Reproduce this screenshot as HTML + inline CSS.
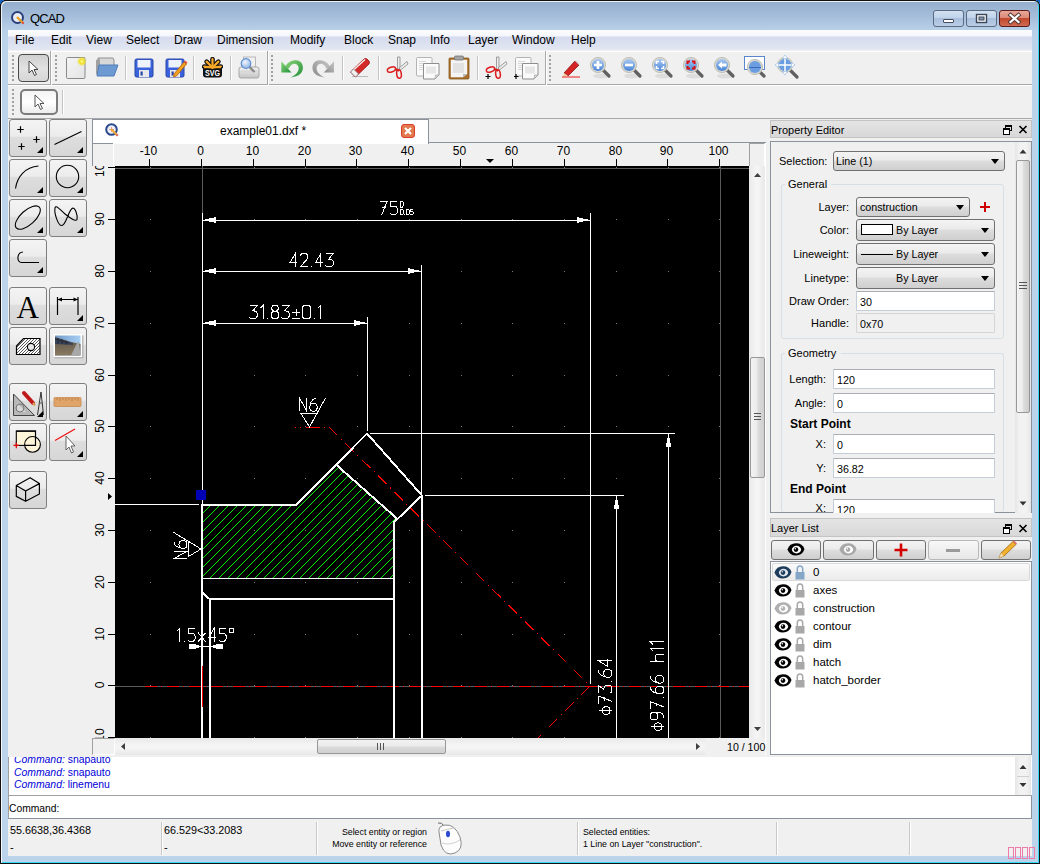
<!DOCTYPE html>
<html><head><meta charset="utf-8">
<style>
*{box-sizing:border-box}
html,body{margin:0;padding:0}
body{width:1040px;height:864px;position:relative;overflow:hidden;background:#1a1a1a;font-family:"Liberation Sans",sans-serif;font-size:12px;color:#000}
.a{position:absolute}
#frame{left:0;top:0;width:1040px;height:864px;border-radius:6px 6px 0 0;background:linear-gradient(#93aecb 0px,#a3bcd9 14px,#b8cfe8 29px,#bcd3ec 40px,#bcd3ec 864px);border:1px solid #111;box-shadow:inset 1px 1px 0 rgba(255,255,255,.85),inset -1px -1px 0 #3ad8f8}
#menubar{left:8px;top:30px;width:1024px;height:21px;box-sizing:border-box;background:linear-gradient(#fcfdfe 0,#f5f6fb 6px,#d5dbee 7px,#e3e7f3 20px);border-bottom:1px solid #b0b6c8}
#menubar span{position:absolute;top:3px;font-size:12px}
#content{left:8px;top:50px;width:1024px;height:805px;background:#f0f0f0}
.tb{border-bottom:1px solid #a0a0a0}
.sep{position:absolute;width:1px;background:#c4c4c4;box-shadow:1px 0 0 #fff}
.handle{position:absolute;width:2px;background:repeating-linear-gradient(#a0a0a0 0 2px,transparent 2px 4px)}
.tbtn{position:absolute;border:1px solid #6f6f6f;border-radius:4px;background:linear-gradient(#f6f6f6,#e9e9e9 45%,#d9d9d9 50%,#cfcfcf)}
.tool{position:absolute;width:38px;height:38px;border:1px solid #7e7e7e;border-radius:3px;background:linear-gradient(#f4f4f4 0,#ececec 45%,#dedede 48%,#d6d6d6 100%)}
.tool:after{content:"";position:absolute;right:2px;bottom:2px;border-style:solid;border-width:0 0 8px 8px;border-color:transparent transparent #000 transparent}
.tool.n:after{display:none}
</style></head><body>

<div id="frame" class="a"></div>
<!-- title -->
<svg class="a" style="left:11px;top:11px" width="14" height="14" viewBox="0 0 14 14"><circle cx="6.5" cy="6.5" r="5.5" fill="#e8ecf4" stroke="#2a3f7a" stroke-width="2"/><path d="M6 6 L12 12" stroke="#e8a020" stroke-width="2.2"/><circle cx="12" cy="12" r="1.2" fill="#e05050"/></svg>
<div class="a" style="left:30px;top:11px;font-size:13px;letter-spacing:-0.9px;color:#000">QCAD</div>
<div class="a" style="left:0;top:0;width:4px;height:4px;background:radial-gradient(circle at 4px 4px,transparent 3px,#1565c8 3.5px)"></div>
<div class="a" style="left:1036px;top:0;width:4px;height:4px;background:radial-gradient(circle at 0 4px,transparent 3px,#1565c8 3.5px)"></div>
<!-- window buttons -->
<div class="a" style="left:933px;top:10px;width:31px;height:17px;border:1px solid #5a6a80;border-radius:3px;background:linear-gradient(#d3e1f1 0,#c0d3ea 45%,#a9bfdc 50%,#b9cde6 100%)"><div class="a" style="left:9px;top:8px;width:11px;height:4px;background:#fff;border:1px solid #44505f;border-radius:1px"></div></div>
<div class="a" style="left:966px;top:10px;width:31px;height:17px;border:1px solid #5a6a80;border-radius:3px;background:linear-gradient(#d3e1f1 0,#c0d3ea 45%,#a9bfdc 50%,#b9cde6 100%)"></div>
<svg class="a" style="left:966px;top:10px" width="31" height="17" viewBox="0 0 31 17"><rect x="10.5" y="4.5" width="10" height="8" fill="#fff" stroke="#3a4658" stroke-width="1.4"/><rect x="13" y="7" width="5" height="3" fill="#8898b0" stroke="#3a4658" stroke-width="1"/></svg>
<div class="a" style="left:999px;top:10px;width:31px;height:17px;border:1px solid #5a1c1c;border-radius:3px;background:linear-gradient(#e8a899 0,#dd8a78 45%,#c24a2f 50%,#d06a50 100%)"></div>
<svg class="a" style="left:999px;top:10px" width="31" height="17" viewBox="0 0 31 17"><path d="M11.5 5 L19.5 12 M19.5 5 L11.5 12" stroke="#4a3030" stroke-width="4" stroke-linecap="square"/><path d="M11.5 5 L19.5 12 M19.5 5 L11.5 12" stroke="#fff" stroke-width="2.3" stroke-linecap="square"/></svg>

<div id="menubar" class="a">
<span style="left:7px">File</span><span style="left:43px">Edit</span><span style="left:78px">View</span><span style="left:118px">Select</span><span style="left:166px">Draw</span><span style="left:209px">Dimension</span><span style="left:282px">Modify</span><span style="left:336px">Block</span><span style="left:380px">Snap</span><span style="left:422px">Info</span><span style="left:460px">Layer</span><span style="left:504px">Window</span><span style="left:563px">Help</span>
</div>
<div id="content" class="a"></div>

<!-- toolbar 1 -->
<div class="a" style="left:8px;top:51px;width:1024px;height:34px;border-top:1px solid #fff;border-bottom:1px solid #a8a8a8;box-shadow:0 1px 0 #fff"></div>
<div class="a" style="left:50px;top:51px;width:1px;height:34px;background:#a8a8a8;box-shadow:1px 0 0 #fff"></div>
<div class="a" style="left:267px;top:51px;width:1px;height:34px;background:#a8a8a8;box-shadow:1px 0 0 #fff"></div>
<div class="a" style="left:545px;top:51px;width:1px;height:34px;background:#a8a8a8;box-shadow:1px 0 0 #fff"></div>
<div class="handle" style="left:12px;top:55px;height:27px"></div>
<div class="handle" style="left:55px;top:55px;height:27px"></div>
<div class="handle" style="left:271px;top:55px;height:27px"></div>
<div class="handle" style="left:549px;top:55px;height:27px"></div>
<div class="a" style="left:18px;top:54px;width:31px;height:28px;border:1px solid #4a4a4a;border-radius:4px;background:linear-gradient(#cfcfcf,#dedede 40%,#e2e2e2 50%,#d6d6d6)"></div>
<svg class="a" style="left:28px;top:60px" width="12" height="17" viewBox="0 0 12 17"><path d="M1 1 L1 13 L4 10 L6.5 15.5 L8.5 14.5 L6 9.5 L10 9.5 Z" fill="#fff" stroke="#444" stroke-width="1"/></svg>
<div class="sep" style="left:125px;top:56px;height:24px"></div>
<div class="sep" style="left:193px;top:56px;height:24px"></div>
<div class="sep" style="left:230px;top:56px;height:24px"></div>
<div class="sep" style="left:342px;top:56px;height:24px"></div>
<div class="sep" style="left:378px;top:56px;height:24px"></div>
<div class="sep" style="left:477px;top:56px;height:24px"></div>
<!-- toolbar 2 -->
<div class="handle" style="left:12px;top:89px;height:27px"></div>
<div class="a" style="left:20px;top:89px;width:38px;height:26px;border:2px solid #7c7c7c;border-radius:5px;background:linear-gradient(#f4f4f4,#ffffff 50%,#ececec)"></div>
<svg class="a" style="left:34px;top:94px" width="12" height="17" viewBox="0 0 12 17"><path d="M1 1 L1 13 L4 10 L6.5 15.5 L8.5 14.5 L6 9.5 L10 9.5 Z" fill="#fff" stroke="#555" stroke-width="1"/></svg>
<div class="sep" style="left:62px;top:90px;height:24px"></div>


<svg class="a" style="left:65px;top:56px" width="24" height="24" viewBox="0 0 24 24"><defs><radialGradient id="yg"><stop offset="0" stop-color="#ffffa0"/><stop offset=".45" stop-color="#f0e020"/><stop offset="1" stop-color="#f0e020" stop-opacity="0"/></radialGradient>
<linearGradient id="pg" x1="0" y1="0" x2="1" y2="1"><stop offset="0" stop-color="#f4f4f4"/><stop offset="1" stop-color="#e4e4e4"/></linearGradient></defs>
<rect x="1.5" y="1.5" width="18.5" height="21" rx="1" fill="url(#pg)" stroke="#8a8a8a"/><circle cx="16.8" cy="5.4" r="5" fill="url(#yg)"/></svg>
<svg class="a" style="left:94px;top:56px" width="26" height="22" viewBox="0 0 26 22"><path d="M4 2 L19 2 L20 4 L20 12 L4 12 Z" fill="#d8d8d8" stroke="#909090"/><path d="M2 4 L6 3 L6 20 L2 18 Z" fill="#a0a0a0"/><path d="M5 9 L24 9 L20 20 L3 20 Z" fill="#6d9ad2" stroke="#4f7cb8"/></svg>
<svg class="a" style="left:134px;top:58px" width="24" height="21" viewBox="0 0 24 21"><rect x="1" y="1" width="18" height="18" rx="1.5" fill="#3a62dc" stroke="#2a46a8"/><rect x="3.5" y="2" width="13" height="7.5" fill="#eef2fb"/><rect x="5" y="12" width="10" height="7" fill="#e8e8ec"/><rect x="6.5" y="13.5" width="2.2" height="4" fill="#2a46a8"/></svg>
<svg class="a" style="left:165px;top:58px" width="24" height="21" viewBox="0 0 24 21"><rect x="1" y="1" width="18" height="18" rx="1.5" fill="#3a62dc" stroke="#2a46a8"/><rect x="3.5" y="2" width="13" height="7.5" fill="#eef2fb"/><rect x="5" y="12" width="10" height="7" fill="#e8e8ec"/><rect x="6.5" y="13.5" width="2.2" height="4" fill="#2a46a8"/><path d="M9 16 L19 4 L21.5 6 L11.5 18 L8.5 19 Z" fill="#f0a020" stroke="#b06010" stroke-width=".8"/><path d="M19 4 L21.5 6 L22.5 4.5 L20 2.5 Z" fill="#e05030"/></svg>
<svg class="a" style="left:202px;top:57px" width="21" height="22" viewBox="0 0 21 22"><rect x="1" y="9" width="19" height="11.5" rx="3" fill="#111"/><path d="M10.5 10.5 L10.5 2.2" stroke="#111" stroke-width="4.6" stroke-linecap="round"/><path d="M10.5 10.5 L4.6 4.6" stroke="#111" stroke-width="4.6" stroke-linecap="round"/><path d="M10.5 10.5 L16.4 4.6" stroke="#111" stroke-width="4.6" stroke-linecap="round"/><path d="M10.5 10.5 L2.2 9.5" stroke="#111" stroke-width="4.6" stroke-linecap="round"/><path d="M10.5 10.5 L18.8 9.5" stroke="#111" stroke-width="4.6" stroke-linecap="round"/><path d="M10.5 10.5 L10.5 2.2" stroke="#f7a928" stroke-width="2.2" stroke-linecap="round"/><path d="M10.5 10.5 L4.6 4.6" stroke="#f7a928" stroke-width="2.2" stroke-linecap="round"/><path d="M10.5 10.5 L16.4 4.6" stroke="#f7a928" stroke-width="2.2" stroke-linecap="round"/><path d="M10.5 10.5 L2.2 9.5" stroke="#f7a928" stroke-width="2.2" stroke-linecap="round"/><path d="M10.5 10.5 L18.8 9.5" stroke="#f7a928" stroke-width="2.2" stroke-linecap="round"/><rect x="2" y="9.6" width="17" height="1.6" fill="#f7a928"/><text x="10.5" y="19" font-family="Liberation Sans" font-weight="bold" font-size="9" fill="#fff" text-anchor="middle" textLength="15" lengthAdjust="spacingAndGlyphs">SVG</text></svg>
<svg class="a" style="left:237px;top:56px" width="24" height="23" viewBox="0 0 24 23"><defs><radialGradient id="lensg" cx=".4" cy=".35"><stop offset="0" stop-color="#f4f8fe"/><stop offset="1" stop-color="#a8c4ea"/></radialGradient><linearGradient id="prg" x1="0" y1="0" x2="0" y2="1"><stop offset="0" stop-color="#f2f2f2"/><stop offset="1" stop-color="#c4c4c4"/></linearGradient></defs><rect x="6.5" y="1" width="12" height="11" fill="#f0f0f0" stroke="#b8b8b8"/><path d="M2 13 Q2 11 4 11 L20 11 Q22 11 22 13 L22 20 Q22 22 20 22 L4 22 Q2 22 2 20 Z" fill="url(#prg)" stroke="#a8a8a8"/><rect x="4" y="14.5" width="16" height="2" fill="#d8d8d8"/><path d="M12.5 11 L17.5 16" stroke="#8a8a8a" stroke-width="2.4"/><circle cx="9" cy="7.5" r="4.8" fill="url(#lensg)" stroke="#5f8fd6" stroke-width="1.2"/></svg>
<svg class="a" style="left:279px;top:57px" width="26" height="22" viewBox="0 0 26 22"><defs><linearGradient id="ug" x1="0" y1="0" x2="1" y2="1"><stop offset="0" stop-color="#8ed47a"/><stop offset="1" stop-color="#1e9038"/></linearGradient></defs><path d="M6 10 C 9 3, 21 0, 23.5 8 C 25.5 15, 20 20, 11 20.5 C 17 18.5, 20.5 14, 19.5 10 C 18 5.5, 12 5.5, 10 11.5 Z" fill="url(#ug)"/><path d="M2.3 4.3 L2.3 15.5 L12.5 15.5 Z" fill="url(#ug)"/></svg>
<svg class="a" style="left:310px;top:57px" width="26" height="22" viewBox="0 0 26 22"><defs><linearGradient id="rg" x1="0" y1="0" x2="1" y2="1"><stop offset="0" stop-color="#c8c8c8"/><stop offset="1" stop-color="#8a8a8a"/></linearGradient></defs><g transform="translate(26.3 0) scale(-1 1)"><path d="M6 10 C 9 3, 21 0, 23.5 8 C 25.5 15, 20 20, 11 20.5 C 17 18.5, 20.5 14, 19.5 10 C 18 5.5, 12 5.5, 10 11.5 Z" fill="url(#rg)"/><path d="M2.3 4.3 L2.3 15.5 L12.5 15.5 Z" fill="url(#rg)"/></g></svg>
<svg class="a" style="left:349px;top:57px" width="22" height="22" viewBox="0 0 22 22"><path d="M3 19.5 L19 19.5" stroke="#bbb" stroke-width="1"/><path d="M1.5 15 L15 2 Q16.5 1 18 2 L20 4 Q21 5.5 20 7 L6.5 20 Z" fill="#d42a2a" stroke="#9c1414" stroke-width=".8"/><path d="M4 13.5 L16 2.5" stroke="#f6f6f6" stroke-width="1.3"/><path d="M1.5 15 L4.5 12 L9.5 17 L6.5 20 Z" fill="#f2f2f2" stroke="#8a8a8a" stroke-width=".8"/></svg>
<svg class="a" style="left:385px;top:56px" width="24" height="24" viewBox="0 0 24 24"><path d="M12.5 1 L15 1 L15 12 L12.5 14 Z" fill="#ececec" stroke="#8a8a8a" stroke-width=".8"/><path d="M14 12 L22 5.5 L23 8 L15.5 14 Z" fill="#ececec" stroke="#8a8a8a" stroke-width=".8"/><ellipse cx="6.5" cy="13.5" rx="4.3" ry="2.4" transform="rotate(-20 6.5 13.5)" fill="none" stroke="#dc1c1c" stroke-width="1.5"/><ellipse cx="14" cy="18" rx="2.3" ry="4.3" transform="rotate(-8 14 18)" fill="none" stroke="#dc1c1c" stroke-width="1.5"/><path d="M10 12.5 L14 15" stroke="#dc1c1c" stroke-width="1.6"/></svg>
<svg class="a" style="left:415px;top:56px" width="25" height="24" viewBox="0 0 25 24"><rect x="1.5" y="1.5" width="15.5" height="18.5" rx="1" fill="#fafafa" stroke="#b4b4b4"/><path d="M4 5.5 H11 M4 7.5 H11 M4 9.5 H11 M4 11.5 H11 M4 13.5 H11" stroke="#cfcfcf" stroke-width=".8"/><path d="M8.5 7.5 H24 V19 L20 23 H8.5 Z" fill="#fbfbfb" stroke="#8e8e8e"/><path d="M20 23 L24 19 H20.5 Z" fill="#d8d8d8" stroke="#9a9a9a" stroke-width=".6"/><rect x="11" y="10.5" width="10" height="7" fill="#e6e6e6"/></svg>
<svg class="a" style="left:448px;top:55px" width="22" height="25" viewBox="0 0 22 25"><rect x="1" y="3" width="20" height="21" rx="1" fill="#a8702a" stroke="#86561a" stroke-width=".8"/><path d="M2.8 4.8 H19.2 V19 L15 22.3 H2.8 Z" fill="#f4f4f4"/><rect x="5" y="8" width="11" height="10" fill="#e2e2e2"/><path d="M15 22.3 L19.2 19 H15 Z" fill="#bdbdbd"/><rect x="6.5" y="1" width="9" height="4" rx="1.2" fill="#a4a4a4" stroke="#6e6e6e" stroke-width=".8"/></svg>
<svg class="a" style="left:484px;top:56px" width="24" height="24" viewBox="0 0 24 24"><path d="M12.5 1 L15 1 L15 12 L12.5 14 Z" fill="#ececec" stroke="#8a8a8a" stroke-width=".8"/><path d="M14 12 L22 5.5 L23 8 L15.5 14 Z" fill="#ececec" stroke="#8a8a8a" stroke-width=".8"/><ellipse cx="6.5" cy="13.5" rx="4.3" ry="2.4" transform="rotate(-20 6.5 13.5)" fill="none" stroke="#dc1c1c" stroke-width="1.5"/><ellipse cx="14" cy="18" rx="2.3" ry="4.3" transform="rotate(-8 14 18)" fill="none" stroke="#dc1c1c" stroke-width="1.5"/><path d="M10 12.5 L14 15" stroke="#dc1c1c" stroke-width="1.6"/><path d="M4 18 L4 23 M1.5 20.5 L6.5 20.5" stroke="#000" stroke-width="1.2"/></svg>
<svg class="a" style="left:514px;top:56px" width="25" height="24" viewBox="0 0 25 24"><rect x="1.5" y="1.5" width="15.5" height="18.5" rx="1" fill="#fafafa" stroke="#b4b4b4"/><path d="M4 5.5 H11 M4 7.5 H11 M4 9.5 H11 M4 11.5 H11 M4 13.5 H11" stroke="#cfcfcf" stroke-width=".8"/><path d="M8.5 7.5 H24 V19 L20 23 H8.5 Z" fill="#fbfbfb" stroke="#8e8e8e"/><path d="M20 23 L24 19 H20.5 Z" fill="#d8d8d8" stroke="#9a9a9a" stroke-width=".6"/><rect x="11" y="10.5" width="10" height="7" fill="#e6e6e6"/><path d="M2 18 L2 23 M-0.5 20.5 L4.5 20.5" stroke="#000" stroke-width="1.2"/></svg>
<svg class="a" style="left:561px;top:58px" width="20" height="20" viewBox="0 0 20 20"><path d="M3 15 L14 3 L18 7 L7 18 Z" fill="#d42424" stroke="#8c1010" stroke-width=".8"/><path d="M3 15 L7 18 L1.5 19 Z" fill="#f0d0a0"/><path d="M14 3 L18 7 L19 5 L16 2 Z" fill="#e0e0e0"/><path d="M1 19 L19 19" stroke="#f04040" stroke-width="1.2"/></svg>
<svg class="a" style="left:589px;top:56px" width="24" height="24" viewBox="0 0 24 24"><defs><linearGradient id="lg598" x1="0" y1="0" x2="0" y2="1"><stop offset="0" stop-color="#a8c8f0"/><stop offset="1" stop-color="#4a86d8"/></linearGradient></defs>
<ellipse cx="12" cy="20" rx="8" ry="2.5" fill="#000" opacity=".08"/>
<path d="M14 14 L20 20" stroke="#606060" stroke-width="3.2" stroke-linecap="round"/><circle cx="9" cy="9" r="7.6" fill="#d8d8d0" stroke="#c0c0b8"/><circle cx="9" cy="9" r="6" fill="url(#lg598)"/><path d="M9 5 L9 13 M5 9 L13 9" stroke="#fff" stroke-width="2.6"/></svg>
<svg class="a" style="left:620px;top:56px" width="24" height="24" viewBox="0 0 24 24"><defs><linearGradient id="lg629" x1="0" y1="0" x2="0" y2="1"><stop offset="0" stop-color="#a8c8f0"/><stop offset="1" stop-color="#4a86d8"/></linearGradient></defs>
<ellipse cx="12" cy="20" rx="8" ry="2.5" fill="#000" opacity=".08"/>
<path d="M14 14 L20 20" stroke="#606060" stroke-width="3.2" stroke-linecap="round"/><circle cx="9" cy="9" r="7.6" fill="#d8d8d0" stroke="#c0c0b8"/><circle cx="9" cy="9" r="6" fill="url(#lg629)"/><path d="M5 9 L13 9" stroke="#fff" stroke-width="2.6"/></svg>
<svg class="a" style="left:651px;top:56px" width="24" height="24" viewBox="0 0 24 24"><defs><linearGradient id="lg660" x1="0" y1="0" x2="0" y2="1"><stop offset="0" stop-color="#a8c8f0"/><stop offset="1" stop-color="#4a86d8"/></linearGradient></defs>
<ellipse cx="12" cy="20" rx="8" ry="2.5" fill="#000" opacity=".08"/>
<path d="M14 14 L20 20" stroke="#606060" stroke-width="3.2" stroke-linecap="round"/><circle cx="9" cy="9" r="7.6" fill="#d8d8d0" stroke="#c0c0b8"/><circle cx="9" cy="9" r="6" fill="url(#lg660)"/><path d="M5.5 8 L5.5 5.5 L8 5.5 M10 5.5 L12.5 5.5 L12.5 8 M12.5 10 L12.5 12.5 L10 12.5 M8 12.5 L5.5 12.5 L5.5 10" stroke="#fff" stroke-width="1.6" fill="none"/></svg>
<svg class="a" style="left:682px;top:56px" width="24" height="24" viewBox="0 0 24 24"><defs><linearGradient id="lg691" x1="0" y1="0" x2="0" y2="1"><stop offset="0" stop-color="#a8c8f0"/><stop offset="1" stop-color="#4a86d8"/></linearGradient></defs>
<ellipse cx="12" cy="20" rx="8" ry="2.5" fill="#000" opacity=".08"/>
<path d="M14 14 L20 20" stroke="#606060" stroke-width="3.2" stroke-linecap="round"/><circle cx="9" cy="9" r="7.6" fill="#d8d8d0" stroke="#c0c0b8"/><circle cx="9" cy="9" r="6" fill="url(#lg691)"/><path d="M5.5 8 L5.5 5.5 L8 5.5 M10 5.5 L12.5 5.5 L12.5 8 M12.5 10 L12.5 12.5 L10 12.5 M8 12.5 L5.5 12.5 L5.5 10" stroke="#e01010" stroke-width="2" fill="none"/></svg>
<svg class="a" style="left:713px;top:56px" width="24" height="24" viewBox="0 0 24 24"><defs><linearGradient id="lg722" x1="0" y1="0" x2="0" y2="1"><stop offset="0" stop-color="#a8c8f0"/><stop offset="1" stop-color="#4a86d8"/></linearGradient></defs>
<ellipse cx="12" cy="20" rx="8" ry="2.5" fill="#000" opacity=".08"/>
<path d="M14 14 L20 20" stroke="#606060" stroke-width="3.2" stroke-linecap="round"/><circle cx="9" cy="9" r="7.6" fill="#d8d8d0" stroke="#c0c0b8"/><circle cx="9" cy="9" r="6" fill="url(#lg722)"/><path d="M5 9 L9 5.5 L9 7.5 L13.5 7.5 L13.5 10.5 L9 10.5 L9 12.5 Z" fill="#fff"/></svg>
<svg class="a" style="left:743px;top:55px" width="26" height="26" viewBox="0 0 26 26"><rect x="1.5" y="1.5" width="20" height="13" fill="#fff" stroke="#5a86cc"/><path d="M15 15 L21 21" stroke="#606060" stroke-width="3.2" stroke-linecap="round"/><circle cx="12" cy="12" r="7.6" fill="#d8d8d0" stroke="#c0c0b8"/><circle cx="12" cy="12" r="6" fill="#6a9ee0"/><path d="M6 12.5 L18 12.5" stroke="#3a6ab8" stroke-width="1"/></svg>
<svg class="a" style="left:775px;top:55px" width="26" height="26" viewBox="0 0 26 26"><path d="M15 15 L22 22" stroke="#606060" stroke-width="3.2" stroke-linecap="round"/><circle cx="10" cy="10" r="7.6" fill="#d8d8d0" stroke="#c0c0b8"/><circle cx="10" cy="10" r="6.2" fill="#6a9ee0"/><path d="M10 1 L10 19 M1 10 L19 10" stroke="#fff" stroke-width="1.5"/><path d="M10 0 L7.5 3.5 L12.5 3.5 Z M10 20 L7.5 16.5 L12.5 16.5 Z M0 10 L3.5 7.5 L3.5 12.5 Z M20 10 L16.5 7.5 L16.5 12.5 Z" fill="#fff" stroke="#7aa8e0" stroke-width=".5"/></svg>
<div class="tool" style="left:9px;top:119px"><svg class="a" style="left:-1px;top:-1px" width="38" height="38" viewBox="0 0 38 38"><path d="M8.3 10.5 H14.7 M11.5 7.3 V13.7 M24.3 20.5 H30.7 M27.5 17.3 V23.7 M9.3 27.5 H15.7 M12.5 24.3 V30.7" stroke="#000" stroke-width="1.2" fill="none"/></svg></div>
<div class="tool" style="left:49px;top:119px"><svg class="a" style="left:-1px;top:-1px" width="38" height="38" viewBox="0 0 38 38"><path d="M5.5 25.5 L32.5 12.5" stroke="#000" stroke-width="1.1"/></svg></div>
<div class="tool" style="left:9px;top:159px"><svg class="a" style="left:-1px;top:-1px" width="38" height="38" viewBox="0 0 38 38"><path d="M6.5 29.5 C 8 18, 16 8, 29.5 7" stroke="#000" stroke-width="1.1" fill="none"/></svg></div>
<div class="tool" style="left:49px;top:159px"><svg class="a" style="left:-1px;top:-1px" width="38" height="38" viewBox="0 0 38 38"><circle cx="18.5" cy="17.5" r="11.2" stroke="#000" stroke-width="1.1" fill="none"/></svg></div>
<div class="tool" style="left:9px;top:199px"><svg class="a" style="left:-1px;top:-1px" width="38" height="38" viewBox="0 0 38 38"><ellipse cx="18.8" cy="18.6" rx="15.5" ry="7.2" transform="rotate(-42 18.8 18.6)" stroke="#000" stroke-width="1.1" fill="none"/></svg></div>
<div class="tool" style="left:49px;top:199px"><svg class="a" style="left:-1px;top:-1px" width="38" height="38" viewBox="0 0 38 38"><path d="M6 9 C 5 14, 9 27, 13 26.5 C 17 26, 19 13, 23 9.5 C 26 7, 29 17, 28 20.5 C 27 23, 21 19, 16 15 C 11 11, 7 5, 6 9 Z" stroke="#000" stroke-width="1.1" fill="none"/></svg></div>
<div class="tool" style="left:9px;top:239px"><svg class="a" style="left:-1px;top:-1px" width="38" height="38" viewBox="0 0 38 38"><path d="M14 13 C 7.5 13.5, 7.5 23.5, 12.5 23.5 L 30 23.5" stroke="#000" stroke-width="1.1" fill="none"/></svg></div>
<div class="tool n" style="left:9px;top:287px"><svg class="a" style="left:-1px;top:-1px" width="38" height="38" viewBox="0 0 38 38"><text x="18.8" y="30.5" font-family="Liberation Serif" font-size="31" text-anchor="middle" fill="#000">A</text></svg></div>
<div class="tool" style="left:49px;top:287px"><svg class="a" style="left:-1px;top:-1px" width="38" height="38" viewBox="0 0 38 38"><path d="M8.5 10 V28 M29 10 V28 M8.5 12.5 H29" stroke="#000" stroke-width="1.2" fill="none"/><path d="M8.5 12.5 L13 10.5 V14.5 Z M29 12.5 L24.5 10.5 V14.5 Z" fill="#000"/></svg></div>
<div class="tool n" style="left:9px;top:327px"><svg class="a" style="left:-1px;top:-1px" width="38" height="38" viewBox="0 0 38 38"><defs><clipPath id="hc"><path d="M7.5 19 L14.5 11.5 H31 V27.5 H7.5 Z"/></clipPath></defs><path d="M7.5 19 L14.5 11.5 H31 V27.5 H7.5 Z" fill="#fff"/><g clip-path="url(#hc)"><path d="M-8 30 L14 8" stroke="#222" stroke-width=".75"/><path d="M-5 30 L17 8" stroke="#222" stroke-width=".75"/><path d="M-2 30 L20 8" stroke="#222" stroke-width=".75"/><path d="M1 30 L23 8" stroke="#222" stroke-width=".75"/><path d="M4 30 L26 8" stroke="#222" stroke-width=".75"/><path d="M7 30 L29 8" stroke="#222" stroke-width=".75"/><path d="M10 30 L32 8" stroke="#222" stroke-width=".75"/><path d="M13 30 L35 8" stroke="#222" stroke-width=".75"/><path d="M16 30 L38 8" stroke="#222" stroke-width=".75"/><path d="M19 30 L41 8" stroke="#222" stroke-width=".75"/><path d="M22 30 L44 8" stroke="#222" stroke-width=".75"/><path d="M25 30 L47 8" stroke="#222" stroke-width=".75"/><path d="M28 30 L50 8" stroke="#222" stroke-width=".75"/><path d="M31 30 L53 8" stroke="#222" stroke-width=".75"/></g><path d="M7.5 19 L14.5 11.5 H31 V27.5 H7.5 Z" stroke="#000" stroke-width="1.2" fill="none"/><circle cx="22" cy="20" r="3.6" fill="#e8e8e8" stroke="#000" stroke-width="1.1"/></svg></div>
<div class="tool n" style="left:49px;top:327px"><svg class="a" style="left:-1px;top:-1px" width="38" height="38" viewBox="0 0 38 38"><rect x="5.5" y="8.5" width="29" height="23" fill="#b8b8b8"/><rect x="4.5" y="7" width="28.5" height="23" fill="#fff"/><defs><linearGradient id="sky" x1="0" y1="0" x2="1" y2="0"><stop offset="0" stop-color="#7098c8"/><stop offset="1" stop-color="#a8d0f4"/></linearGradient><linearGradient id="gnd" x1="0" y1="0" x2="0" y2="1"><stop offset="0" stop-color="#5a5448"/><stop offset="1" stop-color="#8a7a60"/></linearGradient></defs><rect x="6" y="8.5" width="25.5" height="20" fill="url(#sky)"/><path d="M6 10 L22 15 L31.5 17 V28.5 H6 Z" fill="url(#gnd)"/><path d="M6 10.5 L24 16 L24 18 L6 17 Z" fill="#3a4458"/><path d="M6 12 L20 16 M9 11 V17 M13 12 V17 M17 13.5 V17.5" stroke="#20242c" stroke-width=".8"/><path d="M22 28.5 L28.5 15 L30 15 L31.5 28.5 Z" fill="#a8a8a8"/></svg></div>
<div class="tool" style="left:9px;top:383px"><svg class="a" style="left:-1px;top:-1px" width="38" height="38" viewBox="0 0 38 38"><path d="M4.5 11 V32.5 H25.5 Z" fill="#b8b8b8" stroke="#444" stroke-width="1"/><path d="M8 20 V29 H17 Z" fill="#d8d8d8"/><circle cx="11" cy="25" r="4" fill="none" stroke="#777" stroke-width="1"/><path d="M15 10 L24 20" stroke="#c01818" stroke-width="4" stroke-linecap="round"/><path d="M24 20 L26 22.5" stroke="#d8a060" stroke-width="2.2"/><path d="M32 9 L28.5 32 M32 9 L34.5 32" stroke="#333" stroke-width="1" fill="none"/><path d="M30 20 L33.5 20" stroke="#555" stroke-width="1"/></svg></div>
<div class="tool" style="left:49px;top:383px"><svg class="a" style="left:-1px;top:-1px" width="38" height="38" viewBox="0 0 38 38"><rect x="5" y="14.5" width="27" height="9" rx="1" fill="#e0a468" stroke="#c88a50" stroke-width=".8"/><path d="M8 15 V17 M11 15 V18 M14 15 V17 M17 15 V18 M20 15 V17 M23 15 V18 M26 15 V17 M29 15 V18" stroke="#9a6a3a" stroke-width=".6"/></svg></div>
<div class="tool n" style="left:9px;top:423px"><svg class="a" style="left:-1px;top:-1px" width="38" height="38" viewBox="0 0 38 38"><rect x="7.3" y="8.1" width="19.2" height="14.3" fill="#fff5d8" stroke="#000" stroke-width="1.1"/><circle cx="23.5" cy="21.4" r="7.9" fill="#fff5d8" stroke="#000" stroke-width="1.1"/><path d="M7.3 8.1 H26.5 V22.4" stroke="#000" stroke-width="1.1" fill="none"/><path d="M15.6 22.4 H26.5 V14" stroke="#000" stroke-width="1.1" fill="none"/><path d="M4.5 22.4 H10 M7.3 19.5 V25.3" stroke="#e00000" stroke-width="1.2"/></svg></div>
<div class="tool" style="left:49px;top:423px"><svg class="a" style="left:-1px;top:-1px" width="38" height="38" viewBox="0 0 38 38"><path d="M6 17.5 L26 6" stroke="#ee1111" stroke-width="1.3"/><path d="M17 13 L17 27 L20 24 L22.5 30 L24.5 29 L22 23 L26 23 Z" fill="#fff" stroke="#555" stroke-width=".9"/></svg></div>
<div class="tool n" style="left:9px;top:471px"><svg class="a" style="left:-1px;top:-1px" width="38" height="38" viewBox="0 0 38 38"><path d="M21.1 6.7 L7.3 14.6 V25.4 L16.6 30.3 L30.4 23 V12.6 Z M7.3 14.6 L16.6 20 L30.4 12.6 M16.6 20 V30.3" stroke="#000" stroke-width="1.2" fill="none" stroke-linejoin="round"/></svg></div>
<div class="a" style="left:8px;top:118px;width:1024px;height:1px;background:#a8a8a8"></div>
<style>.tool:after{right:3px;bottom:3px;border-width:0 0 6px 6px}</style>
<div class="a" style="left:92px;top:119px;width:337px;height:25px;background:#fff;border:1px solid #8a929e;border-bottom:none"></div>
<div class="a" style="left:428px;top:142px;width:338px;height:1px;background:#8a929e"></div>
<svg class="a" style="left:105px;top:123px" width="15" height="15" viewBox="0 0 15 15"><circle cx="6.5" cy="6.5" r="5.3" fill="#eef0f6" stroke="#2d4b8c" stroke-width="2"/><path d="M4 6.5 H9 M6.5 4 V9" stroke="#c66" stroke-width=".6"/><path d="M6 6 L11.5 11.5" stroke="#f0a830" stroke-width="2"/><circle cx="12" cy="12" r="1.3" fill="#e07060"/></svg>
<div class="a" style="left:220px;top:124px;font-size:12px;color:#000">example01.dxf *</div>
<svg class="a" style="left:400px;top:123px" width="16" height="16" viewBox="0 0 16 16"><rect x="1.5" y="1.5" width="13" height="13" rx="2.5" fill="#e2794f" stroke="#d9402a"/><path d="M5 5 L11 11 M11 5 L5 11" stroke="#fff" stroke-width="2.2"/></svg>
<div class="a" style="left:92px;top:143px;width:1px;height:23px;background:#8a929e"></div>
<div class="a" style="left:93px;top:143px;width:21px;height:1px;background:#8a929e"></div>
<div class="a" style="left:113px;top:143px;width:1px;height:23px;background:#fff"></div>
<div class="a" style="left:749px;top:143px;width:16px;height:23px;border-left:1px solid #a0a0a0;border-top:1px solid #a0a0a0;border-right:1px solid #fff"></div>
<div class="a" style="left:765px;top:143px;width:1px;height:612px;background:#fff"></div>
<svg class="a" style="left:115px;top:143px" width="634" height="23" viewBox="115 143 634 23" shape-rendering="crispEdges"><path d="M149.5 159 V166" stroke="#000" stroke-width="1"/><text x="148.5" y="155" font-family="Liberation Sans" font-size="12" text-anchor="middle" fill="#000" shape-rendering="auto">-10</text><path d="M201.5 159 V166" stroke="#000" stroke-width="1"/><text x="200.5" y="155" font-family="Liberation Sans" font-size="12" text-anchor="middle" fill="#000" shape-rendering="auto">0</text><path d="M253.5 159 V166" stroke="#000" stroke-width="1"/><text x="252.5" y="155" font-family="Liberation Sans" font-size="12" text-anchor="middle" fill="#000" shape-rendering="auto">10</text><path d="M305.5 159 V166" stroke="#000" stroke-width="1"/><text x="304.5" y="155" font-family="Liberation Sans" font-size="12" text-anchor="middle" fill="#000" shape-rendering="auto">20</text><path d="M356.5 159 V166" stroke="#000" stroke-width="1"/><text x="355.5" y="155" font-family="Liberation Sans" font-size="12" text-anchor="middle" fill="#000" shape-rendering="auto">30</text><path d="M408.5 159 V166" stroke="#000" stroke-width="1"/><text x="407.5" y="155" font-family="Liberation Sans" font-size="12" text-anchor="middle" fill="#000" shape-rendering="auto">40</text><path d="M460.5 159 V166" stroke="#000" stroke-width="1"/><text x="459.5" y="155" font-family="Liberation Sans" font-size="12" text-anchor="middle" fill="#000" shape-rendering="auto">50</text><path d="M512.5 159 V166" stroke="#000" stroke-width="1"/><text x="511.5" y="155" font-family="Liberation Sans" font-size="12" text-anchor="middle" fill="#000" shape-rendering="auto">60</text><path d="M564.5 159 V166" stroke="#000" stroke-width="1"/><text x="563.5" y="155" font-family="Liberation Sans" font-size="12" text-anchor="middle" fill="#000" shape-rendering="auto">70</text><path d="M616.5 159 V166" stroke="#000" stroke-width="1"/><text x="615.5" y="155" font-family="Liberation Sans" font-size="12" text-anchor="middle" fill="#000" shape-rendering="auto">80</text><path d="M667.5 159 V166" stroke="#000" stroke-width="1"/><text x="666.5" y="155" font-family="Liberation Sans" font-size="12" text-anchor="middle" fill="#000" shape-rendering="auto">90</text><path d="M719.5 159 V166" stroke="#000" stroke-width="1"/><text x="718.5" y="155" font-family="Liberation Sans" font-size="12" text-anchor="middle" fill="#000" shape-rendering="auto">100</text><path d="M486 159 H494 L490 163 Z" fill="#000" shape-rendering="auto"/></svg>
<svg class="a" style="left:93px;top:166px" width="22" height="572" viewBox="93 166 22 572" shape-rendering="crispEdges"><path d="M108 737.5 H115" stroke="#000" stroke-width="1"/><text transform="translate(104 737) rotate(-90)" x="0" y="0" font-family="Liberation Sans" font-size="12" text-anchor="middle" fill="#000" shape-rendering="auto">-10</text><path d="M108 685.5 H115" stroke="#000" stroke-width="1"/><text transform="translate(104 685) rotate(-90)" x="0" y="0" font-family="Liberation Sans" font-size="12" text-anchor="middle" fill="#000" shape-rendering="auto">0</text><path d="M108 634.5 H115" stroke="#000" stroke-width="1"/><text transform="translate(104 634) rotate(-90)" x="0" y="0" font-family="Liberation Sans" font-size="12" text-anchor="middle" fill="#000" shape-rendering="auto">10</text><path d="M108 582.5 H115" stroke="#000" stroke-width="1"/><text transform="translate(104 582) rotate(-90)" x="0" y="0" font-family="Liberation Sans" font-size="12" text-anchor="middle" fill="#000" shape-rendering="auto">20</text><path d="M108 530.5 H115" stroke="#000" stroke-width="1"/><text transform="translate(104 530) rotate(-90)" x="0" y="0" font-family="Liberation Sans" font-size="12" text-anchor="middle" fill="#000" shape-rendering="auto">30</text><path d="M108 478.5 H115" stroke="#000" stroke-width="1"/><text transform="translate(104 478) rotate(-90)" x="0" y="0" font-family="Liberation Sans" font-size="12" text-anchor="middle" fill="#000" shape-rendering="auto">40</text><path d="M108 426.5 H115" stroke="#000" stroke-width="1"/><text transform="translate(104 426) rotate(-90)" x="0" y="0" font-family="Liberation Sans" font-size="12" text-anchor="middle" fill="#000" shape-rendering="auto">50</text><path d="M108 375.5 H115" stroke="#000" stroke-width="1"/><text transform="translate(104 375) rotate(-90)" x="0" y="0" font-family="Liberation Sans" font-size="12" text-anchor="middle" fill="#000" shape-rendering="auto">60</text><path d="M108 323.5 H115" stroke="#000" stroke-width="1"/><text transform="translate(104 323) rotate(-90)" x="0" y="0" font-family="Liberation Sans" font-size="12" text-anchor="middle" fill="#000" shape-rendering="auto">70</text><path d="M108 271.5 H115" stroke="#000" stroke-width="1"/><text transform="translate(104 271) rotate(-90)" x="0" y="0" font-family="Liberation Sans" font-size="12" text-anchor="middle" fill="#000" shape-rendering="auto">80</text><path d="M108 219.5 H115" stroke="#000" stroke-width="1"/><text transform="translate(104 219) rotate(-90)" x="0" y="0" font-family="Liberation Sans" font-size="12" text-anchor="middle" fill="#000" shape-rendering="auto">90</text><path d="M108 167.5 H115" stroke="#000" stroke-width="1"/><text transform="translate(104 167) rotate(-90)" x="0" y="0" font-family="Liberation Sans" font-size="12" text-anchor="middle" fill="#000" shape-rendering="auto">100</text><path d="M108 493 V500 L112 496.5 Z" fill="#000" shape-rendering="auto"/></svg>
<div class="a" style="left:749px;top:166px;width:16px;height:572px;background:linear-gradient(90deg,#e8e8e8,#f4f4f4 40%,#f4f4f4 60%,#e8e8e8)"></div>
<svg class="a" style="left:750px;top:166px" width="15" height="16" viewBox="0 0 15 16"><path d="M4 11 L7.5 7 L11 11 Z" fill="#404040"/></svg>
<svg class="a" style="left:750px;top:722px" width="15" height="16" viewBox="0 0 15 16"><path d="M4 5 L7.5 9 L11 5 Z" fill="#404040"/></svg>
<div class="a" style="left:750px;top:357px;width:15px;height:121px;border:1px solid #979797;border-radius:2px;background:linear-gradient(90deg,#f2f2f2,#ebebeb 45%,#dbdbdb 55%,#cfcfcf)"></div>
<div class="a" style="left:754px;top:413px;width:7px;height:7px;background:repeating-linear-gradient(#555 0 1px,transparent 1px 3px)"></div>
<div class="a" style="left:92px;top:738px;width:23px;height:17px;background:#f0f0f0;border-left:1px solid #a0a0a0;border-top:1px solid #a0a0a0;border-right:1px solid #fff;border-bottom:1px solid #fff"></div>
<div class="a" style="left:115px;top:738px;width:604px;height:17px;background:linear-gradient(#e8e8e8,#f4f4f4 40%,#f4f4f4 60%,#e8e8e8)"></div>
<svg class="a" style="left:115px;top:738px" width="16" height="17" viewBox="0 0 16 17"><path d="M10 5 L6 8.5 L10 12 Z" fill="#404040"/></svg>
<svg class="a" style="left:690px;top:738px" width="16" height="17" viewBox="0 0 16 17"><path d="M6 5 L10 8.5 L6 12 Z" fill="#404040"/></svg>
<div class="a" style="left:317px;top:739px;width:129px;height:15px;border:1px solid #979797;border-radius:2px;background:linear-gradient(#f2f2f2,#ebebeb 45%,#dbdbdb 55%,#cfcfcf)"></div>
<div class="a" style="left:377px;top:743px;width:7px;height:7px;background:repeating-linear-gradient(90deg,#555 0 1px,transparent 1px 3px)"></div>
<div class="a" style="left:705px;top:738px;width:60px;height:17px;background:#f0f0f0"></div>
<div class="a" style="left:727px;top:741px;font-size:10.6px">10 / 100</div>
<svg class="a" style="left:115px;top:166px" width="634" height="572" viewBox="115 166 634 572">
<rect x="115" y="166" width="635" height="572" fill="#000"/>
<path d="M150 737h1v1h-1zM150 685h1v1h-1zM150 634h1v1h-1zM150 582h1v1h-1zM150 530h1v1h-1zM150 478h1v1h-1zM150 426h1v1h-1zM150 375h1v1h-1zM150 323h1v1h-1zM150 271h1v1h-1zM150 219h1v1h-1zM150 167h1v1h-1zM202 737h1v1h-1zM202 685h1v1h-1zM202 634h1v1h-1zM202 582h1v1h-1zM202 530h1v1h-1zM202 478h1v1h-1zM202 426h1v1h-1zM202 375h1v1h-1zM202 323h1v1h-1zM202 271h1v1h-1zM202 219h1v1h-1zM202 167h1v1h-1zM254 737h1v1h-1zM254 685h1v1h-1zM254 634h1v1h-1zM254 582h1v1h-1zM254 530h1v1h-1zM254 478h1v1h-1zM254 426h1v1h-1zM254 375h1v1h-1zM254 323h1v1h-1zM254 271h1v1h-1zM254 219h1v1h-1zM254 167h1v1h-1zM305 737h1v1h-1zM305 685h1v1h-1zM305 634h1v1h-1zM305 582h1v1h-1zM305 530h1v1h-1zM305 478h1v1h-1zM305 426h1v1h-1zM305 375h1v1h-1zM305 323h1v1h-1zM305 271h1v1h-1zM305 219h1v1h-1zM305 167h1v1h-1zM357 737h1v1h-1zM357 685h1v1h-1zM357 634h1v1h-1zM357 582h1v1h-1zM357 530h1v1h-1zM357 478h1v1h-1zM357 426h1v1h-1zM357 375h1v1h-1zM357 323h1v1h-1zM357 271h1v1h-1zM357 219h1v1h-1zM357 167h1v1h-1zM409 737h1v1h-1zM409 685h1v1h-1zM409 634h1v1h-1zM409 582h1v1h-1zM409 530h1v1h-1zM409 478h1v1h-1zM409 426h1v1h-1zM409 375h1v1h-1zM409 323h1v1h-1zM409 271h1v1h-1zM409 219h1v1h-1zM409 167h1v1h-1zM461 737h1v1h-1zM461 685h1v1h-1zM461 634h1v1h-1zM461 582h1v1h-1zM461 530h1v1h-1zM461 478h1v1h-1zM461 426h1v1h-1zM461 375h1v1h-1zM461 323h1v1h-1zM461 271h1v1h-1zM461 219h1v1h-1zM461 167h1v1h-1zM512 737h1v1h-1zM512 685h1v1h-1zM512 634h1v1h-1zM512 582h1v1h-1zM512 530h1v1h-1zM512 478h1v1h-1zM512 426h1v1h-1zM512 375h1v1h-1zM512 323h1v1h-1zM512 271h1v1h-1zM512 219h1v1h-1zM512 167h1v1h-1zM564 737h1v1h-1zM564 685h1v1h-1zM564 634h1v1h-1zM564 582h1v1h-1zM564 530h1v1h-1zM564 478h1v1h-1zM564 426h1v1h-1zM564 375h1v1h-1zM564 323h1v1h-1zM564 271h1v1h-1zM564 219h1v1h-1zM564 167h1v1h-1zM616 737h1v1h-1zM616 685h1v1h-1zM616 634h1v1h-1zM616 582h1v1h-1zM616 530h1v1h-1zM616 478h1v1h-1zM616 426h1v1h-1zM616 375h1v1h-1zM616 323h1v1h-1zM616 271h1v1h-1zM616 219h1v1h-1zM616 167h1v1h-1zM668 737h1v1h-1zM668 685h1v1h-1zM668 634h1v1h-1zM668 582h1v1h-1zM668 530h1v1h-1zM668 478h1v1h-1zM668 426h1v1h-1zM668 375h1v1h-1zM668 323h1v1h-1zM668 271h1v1h-1zM668 219h1v1h-1zM668 167h1v1h-1zM719 737h1v1h-1zM719 685h1v1h-1zM719 634h1v1h-1zM719 582h1v1h-1zM719 530h1v1h-1zM719 478h1v1h-1zM719 426h1v1h-1zM719 375h1v1h-1zM719 323h1v1h-1zM719 271h1v1h-1zM719 219h1v1h-1zM719 167h1v1h-1z" fill="#7a7a7a"/>
<g shape-rendering="crispEdges" stroke-width="1" fill="none">
<path d="M115 686.5 H750 M115 168.5 H750 M202.5 166 V738 M720.5 166 V738" stroke="#5a5a5a"/>
<path d="M144.5 686.5 H750" stroke="#ff0000" stroke-dasharray="12 4.5 1 4.5"/>
</g>
<g shape-rendering="crispEdges" fill="none" stroke="#ff0000" stroke-width="1" stroke-dasharray="12 5 1 5">
<path d="M329 427 L590 686 L538 738"/>
</g>
<path d="M295 427.5 H305 M319 427.5 H327" stroke="#ff0000" stroke-width="1" stroke-dasharray="1 4" shape-rendering="crispEdges"/>
<path d="M306 427.5 H319" stroke="#ff0000" stroke-width="1" shape-rendering="crispEdges"/>
<defs><clipPath id="hclip"><path d="M203 506 H296 L336.5 465.5 L397.5 519 L394 522 V578 H203 Z"/></clipPath></defs>
<g clip-path="url(#hclip)"><path d="M-102.5 620.5 L77.5 440.5 M-93.5 620.5 L86.5 440.5 M-84.5 620.5 L95.5 440.5 M-75.5 620.5 L104.5 440.5 M-66.5 620.5 L113.5 440.5 M-57.5 620.5 L122.5 440.5 M-48.5 620.5 L131.5 440.5 M-39.5 620.5 L140.5 440.5 M-30.5 620.5 L149.5 440.5 M-21.5 620.5 L158.5 440.5 M-12.5 620.5 L167.5 440.5 M-3.5 620.5 L176.5 440.5 M5.5 620.5 L185.5 440.5 M14.5 620.5 L194.5 440.5 M23.5 620.5 L203.5 440.5 M32.5 620.5 L212.5 440.5 M41.5 620.5 L221.5 440.5 M50.5 620.5 L230.5 440.5 M59.5 620.5 L239.5 440.5 M68.5 620.5 L248.5 440.5 M77.5 620.5 L257.5 440.5 M86.5 620.5 L266.5 440.5 M95.5 620.5 L275.5 440.5 M104.5 620.5 L284.5 440.5 M113.5 620.5 L293.5 440.5 M122.5 620.5 L302.5 440.5 M131.5 620.5 L311.5 440.5 M140.5 620.5 L320.5 440.5 M149.5 620.5 L329.5 440.5 M158.5 620.5 L338.5 440.5 M167.5 620.5 L347.5 440.5 M176.5 620.5 L356.5 440.5 M185.5 620.5 L365.5 440.5 M194.5 620.5 L374.5 440.5 M203.5 620.5 L383.5 440.5 M212.5 620.5 L392.5 440.5 M221.5 620.5 L401.5 440.5 M230.5 620.5 L410.5 440.5 M239.5 620.5 L419.5 440.5 M248.5 620.5 L428.5 440.5 M257.5 620.5 L437.5 440.5 M266.5 620.5 L446.5 440.5 M275.5 620.5 L455.5 440.5 M284.5 620.5 L464.5 440.5 M293.5 620.5 L473.5 440.5 M302.5 620.5 L482.5 440.5 M311.5 620.5 L491.5 440.5 M320.5 620.5 L500.5 440.5 M329.5 620.5 L509.5 440.5 M338.5 620.5 L518.5 440.5 M347.5 620.5 L527.5 440.5 M356.5 620.5 L536.5 440.5 M365.5 620.5 L545.5 440.5 M374.5 620.5 L554.5 440.5 M383.5 620.5 L563.5 440.5 M392.5 620.5 L572.5 440.5 M401.5 620.5 L581.5 440.5 M410.5 620.5 L590.5 440.5 M419.5 620.5 L599.5 440.5 M428.5 620.5 L608.5 440.5 M437.5 620.5 L617.5 440.5 M446.5 620.5 L626.5 440.5 M455.5 620.5 L635.5 440.5 M464.5 620.5 L644.5 440.5 M473.5 620.5 L653.5 440.5 M482.5 620.5 L662.5 440.5 M491.5 620.5 L671.5 440.5 M500.5 620.5 L680.5 440.5 M509.5 620.5 L689.5 440.5 M518.5 620.5 L698.5 440.5 " stroke="#00f000" stroke-width="1" fill="none" shape-rendering="crispEdges"/></g>
<g fill="none" stroke="#fff" stroke-width="2" shape-rendering="crispEdges">
<path d="M202 738 V505 H296 L367 433.5 L422 495.5 L397.5 519 L393.5 522"/>
<path d="M336.5 465 L397.5 519"/>
<path d="M394 521 V738 M422 495 V738 M202 592 L209.5 599 H394 M210 599 V738"/>
</g>
<path d="M202.5 666 V707" stroke="#ff0000" stroke-width="1" shape-rendering="crispEdges"/>
<g fill="none" stroke="#fff" stroke-width="1" shape-rendering="crispEdges">
<path d="M202.5 213 V505 M115 504.5 H199"/>
<path d="M202 220.5 H590 M590.5 213 V684"/>
<path d="M202 271.5 H421 M421.5 265 V495"/>
<path d="M202 323.5 H367 M367.5 317 V431"/>
<path d="M370 433.5 H675 M668.5 433 V738"/>
<path d="M425 495.5 H624 M616.5 495 V738"/>
<path d="M190 646.5 H223 M202 578.5 H394"/>
</g>
<g shape-rendering="crispEdges">
<path d="M203 220.0 L216 217.0 L216 223.0 Z" fill="#fff"/><path d="M590 220.0 L577 217.0 L577 223.0 Z" fill="#fff"/>
<path d="M203 271.0 L216 268.0 L216 274.0 Z" fill="#fff"/><path d="M421 271.0 L408 268.0 L408 274.0 Z" fill="#fff"/>
<path d="M203 323.0 L216 320.0 L216 326.0 Z" fill="#fff"/><path d="M367 323.0 L354 320.0 L354 326.0 Z" fill="#fff"/>
<path d="M668.5 434 L665.5 447 L671.5 447 Z" fill="#fff"/><path d="M616.5 496 L613.5 509 L619.5 509 Z" fill="#fff"/>
<path d="M189 644 H193 L199 645 V648 L193 649 H189 Z M223 644 H219 L213 645 V648 L219 649 H223 Z" fill="#fff"/>
</g>
<rect x="196" y="490" width="10" height="10" fill="#0000b4"/>
<g shape-rendering="crispEdges">
<g transform="translate(379.6 201.2) scale(1.5)" fill="none" stroke="#fff" stroke-width="1"><path transform="translate(0 0)" d="M0 0 H5 L1.5 9 M1.8 4.5 H4" vector-effect="non-scaling-stroke"/><path transform="translate(7 0)" d="M4.8 0 H0.5 L0.2 3.8 Q1 3.3 2.5 3.3 Q5 3.3 5 6.1 Q5 9 2.5 9 Q0.5 9 0 7.8" vector-effect="non-scaling-stroke"/></g>
<g transform="translate(400 201) scale(0.6 0.72)"><g transform="translate(0 0) scale(1)" fill="none" stroke="#fff" stroke-width="1"><path transform="translate(0 0)" d="M1.5 0 H3.5 Q5 0 5 1.5 V7.5 Q5 9 3.5 9 H1.5 Q0 9 0 7.5 V1.5 Q0 0 1.5 0 Z" vector-effect="non-scaling-stroke"/></g></g>
<g transform="translate(400 209) scale(0.6 0.66)"><g transform="translate(0 0) scale(1)" fill="none" stroke="#fff" stroke-width="1"><path transform="translate(0 0)" d="M1.5 0 H3.5 Q5 0 5 1.5 V7.5 Q5 9 3.5 9 H1.5 Q0 9 0 7.5 V1.5 Q0 0 1.5 0 Z" vector-effect="non-scaling-stroke"/><path transform="translate(7 0)" d="M0.6 8.3 V9" vector-effect="non-scaling-stroke"/><path transform="translate(10 0)" d="M1.5 0 H3.5 Q5 0 5 1.5 V7.5 Q5 9 3.5 9 H1.5 Q0 9 0 7.5 V1.5 Q0 0 1.5 0 Z" vector-effect="non-scaling-stroke"/><path transform="translate(17 0)" d="M4.8 0 H0.5 L0.2 3.8 Q1 3.3 2.5 3.3 Q5 3.3 5 6.1 Q5 9 2.5 9 Q0.5 9 0 7.8" vector-effect="non-scaling-stroke"/></g></g>
<g transform="translate(289.8 253.4) scale(1.5)" fill="none" stroke="#fff" stroke-width="1"><path transform="translate(0 0)" d="M3.8 9 V0 L0 6.3 H5" vector-effect="non-scaling-stroke"/><path transform="translate(7 0)" d="M0 1.8 Q0.3 0 2.5 0 Q5 0 5 2.3 Q5 3.8 3.5 5 L0 9 H5" vector-effect="non-scaling-stroke"/><path transform="translate(14 0)" d="M0.6 8.3 V9" vector-effect="non-scaling-stroke"/><path transform="translate(17 0)" d="M3.8 9 V0 L0 6.3 H5" vector-effect="non-scaling-stroke"/><path transform="translate(24 0)" d="M0 0 H5 L2 3.8 H2.5 Q5 3.8 5 6.4 Q5 9 2.5 9 H1.5 Q0 9 0 8" vector-effect="non-scaling-stroke"/></g>
<g transform="translate(249.8 305.2) scale(1.5)" fill="none" stroke="#fff" stroke-width="1"><path transform="translate(0 0)" d="M0 0 H5 L2 3.8 H2.5 Q5 3.8 5 6.4 Q5 9 2.5 9 H1.5 Q0 9 0 8" vector-effect="non-scaling-stroke"/><path transform="translate(7 0)" d="M0 2 L2 0 V9" vector-effect="non-scaling-stroke"/><path transform="translate(11.3 0)" d="M0.6 8.3 V9" vector-effect="non-scaling-stroke"/><path transform="translate(14.3 0)" d="M2.5 4 Q0.3 4 0.3 2 Q0.3 0 2.5 0 Q4.7 0 4.7 2 Q4.7 4 2.5 4 Q0 4 0 6.5 Q0 9 2.5 9 Q5 9 5 6.5 Q5 4 2.5 4 Z" vector-effect="non-scaling-stroke"/><path transform="translate(21.3 0)" d="M0 0 H5 L2 3.8 H2.5 Q5 3.8 5 6.4 Q5 9 2.5 9 H1.5 Q0 9 0 8" vector-effect="non-scaling-stroke"/><path transform="translate(28.3 0)" d="M2.5 2.5 V7 M0 4.8 H5 M0 9 H5" vector-effect="non-scaling-stroke"/><path transform="translate(35.3 0)" d="M1.5 0 H3.5 Q5 0 5 1.5 V7.5 Q5 9 3.5 9 H1.5 Q0 9 0 7.5 V1.5 Q0 0 1.5 0 Z" vector-effect="non-scaling-stroke"/><path transform="translate(42.3 0)" d="M0.6 8.3 V9" vector-effect="non-scaling-stroke"/><path transform="translate(45.3 0)" d="M0 2 L2 0 V9" vector-effect="non-scaling-stroke"/></g>
<g transform="translate(177 628.3) scale(1.48)" fill="none" stroke="#fff" stroke-width="1"><path transform="translate(0 0)" d="M0 2 L2 0 V9" vector-effect="non-scaling-stroke"/><path transform="translate(4.3 0)" d="M0.6 8.3 V9" vector-effect="non-scaling-stroke"/><path transform="translate(7.3 0)" d="M4.8 0 H0.5 L0.2 3.8 Q1 3.3 2.5 3.3 Q5 3.3 5 6.1 Q5 9 2.5 9 Q0.5 9 0 7.8" vector-effect="non-scaling-stroke"/><path transform="translate(14.3 0)" d="M0 3 L5 9 M5 3 L0 9" vector-effect="non-scaling-stroke"/><path transform="translate(21.3 0)" d="M3.8 9 V0 L0 6.3 H5" vector-effect="non-scaling-stroke"/><path transform="translate(28.3 0)" d="M4.8 0 H0.5 L0.2 3.8 Q1 3.3 2.5 3.3 Q5 3.3 5 6.1 Q5 9 2.5 9 Q0.5 9 0 7.8" vector-effect="non-scaling-stroke"/><path transform="translate(35.3 0)" d="M0 1.5 A1.5 1.5 0 1 0 3 1.5 A1.5 1.5 0 1 0 0 1.5" vector-effect="non-scaling-stroke"/></g>
<g transform="translate(299.5 398.0) scale(1.47)" fill="none" stroke="#fff" stroke-width="1"><path transform="translate(0 0)" d="M0 9 V0 L5 9 V0" vector-effect="non-scaling-stroke"/><path transform="translate(7 0)" d="M4.4 0.2 Q1.2 0.6 0.3 4.5 L0 6.5 Q0 9 2.5 9 Q5 9 5 6.6 V6 Q5 3.6 2.5 3.6 Q0.8 3.6 0.2 5" vector-effect="non-scaling-stroke"/></g>
<g transform="translate(598 714.5) rotate(-90) scale(1.55)" fill="none" stroke="#fff" stroke-width="1"><path transform="translate(0 0)" d="M2.5 0.5 V9 M2.5 2.8 Q5 2.8 5 5.3 Q5 7.8 2.5 7.8 Q0 7.8 0 5.3 Q0 2.8 2.5 2.8 Z" vector-effect="non-scaling-stroke"/><path transform="translate(7 0)" d="M0 0 H5 L1.5 9 M1.8 4.5 H4" vector-effect="non-scaling-stroke"/><path transform="translate(14 0)" d="M0 0 H5 L2 3.8 H2.5 Q5 3.8 5 6.4 Q5 9 2.5 9 H1.5 Q0 9 0 8" vector-effect="non-scaling-stroke"/><path transform="translate(21 0)" d="M0.6 8.3 V9" vector-effect="non-scaling-stroke"/><path transform="translate(24 0)" d="M4.4 0.2 Q1.2 0.6 0.3 4.5 L0 6.5 Q0 9 2.5 9 Q5 9 5 6.6 V6 Q5 3.6 2.5 3.6 Q0.8 3.6 0.2 5" vector-effect="non-scaling-stroke"/><path transform="translate(31 0)" d="M3.8 9 V0 L0 6.3 H5" vector-effect="non-scaling-stroke"/></g>
<g transform="translate(650 730.5) rotate(-90) scale(1.525)" fill="none" stroke="#fff" stroke-width="1"><path transform="translate(0 0)" d="M2.5 0.5 V9 M2.5 2.8 Q5 2.8 5 5.3 Q5 7.8 2.5 7.8 Q0 7.8 0 5.3 Q0 2.8 2.5 2.8 Z" vector-effect="non-scaling-stroke"/><path transform="translate(7 0)" d="M5 3.5 Q4.5 5.2 2.5 5.2 Q0 5.2 0 2.6 Q0 0 2.5 0 Q5 0 5 3 V5 Q5 9 1 9" vector-effect="non-scaling-stroke"/><path transform="translate(14 0)" d="M0 0 H5 L1.5 9 M1.8 4.5 H4" vector-effect="non-scaling-stroke"/><path transform="translate(21 0)" d="M0.6 8.3 V9" vector-effect="non-scaling-stroke"/><path transform="translate(24 0)" d="M4.4 0.2 Q1.2 0.6 0.3 4.5 L0 6.5 Q0 9 2.5 9 Q5 9 5 6.6 V6 Q5 3.6 2.5 3.6 Q0.8 3.6 0.2 5" vector-effect="non-scaling-stroke"/><path transform="translate(31 0)" d="M4.4 0.2 Q1.2 0.6 0.3 4.5 L0 6.5 Q0 9 2.5 9 Q5 9 5 6.6 V6 Q5 3.6 2.5 3.6 Q0.8 3.6 0.2 5" vector-effect="non-scaling-stroke"/><path transform="translate(45 0)" d="M0 0 V9 M0 5 Q0.8 3.3 2.5 3.3 Q5 3.3 5 5.5 V9" vector-effect="non-scaling-stroke"/><path transform="translate(52 0)" d="M0 2 L2 0 V9" vector-effect="non-scaling-stroke"/><path transform="translate(56.3 0)" d="M0 2 L2 0 V9" vector-effect="non-scaling-stroke"/></g>
<g transform="translate(173.5 558.8) rotate(-90) scale(1.5)" fill="none" stroke="#fff" stroke-width="1"><path transform="translate(0 0)" d="M0 9 V0 L5 9 V0" vector-effect="non-scaling-stroke"/><path transform="translate(7 0)" d="M4.4 0.2 Q1.2 0.6 0.3 4.5 L0 6.5 Q0 9 2.5 9 Q5 9 5 6.6 V6 Q5 3.6 2.5 3.6 Q0.8 3.6 0.2 5" vector-effect="non-scaling-stroke"/></g>
</g>
<path d="M325.5 398 L309.5 427 L301 413.5 H317.5" fill="none" stroke="#fff" stroke-width="1" shape-rendering="crispEdges"/>
<path d="M173 532 L201 549 L188.5 541.5 V556.5 L201 549" fill="none" stroke="#fff" stroke-width="1" shape-rendering="crispEdges"/>
</svg>
<style>
.dtitle{position:absolute;left:770px;width:262px;height:18px;background:linear-gradient(#e4e4e4,#d8d8d8);border:1px solid #c4c4c4}
.dbtn{position:absolute}
.combo{position:absolute;border:1px solid #707070;border-radius:3px;background:linear-gradient(#f3f3f3 0,#ebebeb 45%,#dddddd 50%,#cfcfcf 100%)}
.combo .arr{position:absolute;right:5px;top:7px;width:0;height:0;border-left:4.5px solid transparent;border-right:4.5px solid transparent;border-top:5px solid #000}
.inp{position:absolute;border:1px solid #c5cdd8;border-top-color:#abadb3;background:#fff;border-radius:1px}
.grp{position:absolute;border:1px solid #d5dfe5;border-radius:3px}
.lbtn{position:absolute;top:540px;height:20px;border:1px solid #707070;border-radius:3px;background:linear-gradient(#f3f3f3 0,#ebebeb 45%,#dddddd 50%,#cfcfcf 100%)}
</style>
<div class="dtitle" style="top:120px"></div>
<div class="a" style="left:771px;top:124px;font-size:11px;white-space:nowrap;">Property Editor</div>
<svg class="a" style="left:1002px;top:125px" width="30" height="11" viewBox="0 0 30 11"><rect x="3.5" y="0.5" width="6" height="5" fill="none" stroke="#000"/><rect x="3.5" y="0.5" width="6" height="1.5" fill="#000"/><rect x="1.5" y="3.5" width="6" height="6" fill="#fff" stroke="#000"/><rect x="1.5" y="3.5" width="6" height="1.5" fill="#000"/><path d="M17.5 1 L24.5 8 M24.5 1 L17.5 8" stroke="#000" stroke-width="1.6"/></svg>
<div class="a" style="left:770px;top:141px;width:262px;height:372px;border:1px solid #8a929e;background:#f0f0f0"></div>
<div class="a" style="left:1015px;top:142px;width:16px;height:371px;background:linear-gradient(90deg,#e6e6e6,#f2f2f2 30%,#f2f2f2 70%,#e6e6e6)"></div>
<svg class="a" style="left:1015px;top:143px" width="16" height="16" viewBox="0 0 16 16"><path d="M4.5 10.5 L8 6.5 L11.5 10.5 Z" fill="#333"/></svg>
<svg class="a" style="left:1015px;top:496px" width="16" height="16" viewBox="0 0 16 16"><path d="M4.5 5.5 L8 9.5 L11.5 5.5 Z" fill="#333"/></svg>
<div class="a" style="left:1016px;top:160px;width:14px;height:253px;border:1px solid #979797;border-radius:2px;background:linear-gradient(90deg,#f4f4f4,#ececec 45%,#dcdcdc 55%,#cdcdcd)"></div>
<div class="a" style="left:1019px;top:282px;width:8px;height:7px;background:repeating-linear-gradient(#555 0 1px,transparent 1px 3px)"></div>
<div class="a" style="left:779px;top:155px;font-size:11px;white-space:nowrap;">Selection:</div>
<div class="combo" style="left:833px;top:151px;width:172px;height:20px"><div class="arr" style="right:5px"></div></div>
<div class="a" style="left:836px;top:155px;font-size:10.7px;white-space:nowrap;">Line (1)</div>
<div class="grp" style="left:781px;top:184px;width:223px;height:155px"></div>
<div class="a" style="left:785px;top:176px;width:46px;height:14px;background:#f0f0f0"></div>
<div class="a" style="left:788px;top:178px;font-size:11px;white-space:nowrap;">General</div>
<div class="a" style="left:699px;width:150px;text-align:right;top:201px;font-size:11px;white-space:nowrap;">Layer:</div>
<div class="combo" style="left:856px;top:197px;width:114px;height:20px"><div class="arr"></div></div>
<div class="a" style="left:860px;top:201px;font-size:10.7px;white-space:nowrap;">construction</div>
<svg class="a" style="left:979px;top:201px" width="12" height="12" viewBox="0 0 12 12"><path d="M6 1 V11 M1 6 H11" stroke="#d00000" stroke-width="2"/></svg>
<div class="a" style="left:699px;width:150px;text-align:right;top:224px;font-size:11px;white-space:nowrap;">Color:</div>
<div class="combo" style="left:856px;top:219px;width:139px;height:22px"><div class="arr" style="top:8px"></div></div>
<div class="a" style="left:861px;top:224px;width:32px;height:11px;border:1px solid #000;background:#fff"></div>
<div class="a" style="left:896px;top:224px;font-size:10.7px;white-space:nowrap;">By Layer</div>
<div class="a" style="left:699px;width:150px;text-align:right;top:248px;font-size:11px;white-space:nowrap;">Lineweight:</div>
<div class="combo" style="left:856px;top:243px;width:139px;height:22px"><div class="arr" style="top:8px"></div></div>
<div class="a" style="left:861px;top:254px;width:32px;height:1px;background:#000"></div>
<div class="a" style="left:896px;top:248px;font-size:10.7px;white-space:nowrap;">By Layer</div>
<div class="a" style="left:699px;width:150px;text-align:right;top:272px;font-size:11px;white-space:nowrap;">Linetype:</div>
<div class="combo" style="left:856px;top:267px;width:139px;height:22px"><div class="arr" style="top:8px"></div></div>
<div class="a" style="left:896px;top:272px;font-size:10.7px;white-space:nowrap;">By Layer</div>
<div class="a" style="left:699px;width:150px;text-align:right;top:295px;font-size:11px;white-space:nowrap;">Draw Order:</div>
<div class="inp" style="left:856px;top:291px;width:139px;height:20px"></div>
<div class="a" style="left:860px;top:296px;font-size:10.7px;white-space:nowrap;">30</div>
<div class="a" style="left:699px;width:150px;text-align:right;top:317px;font-size:11px;white-space:nowrap;">Handle:</div>
<div class="inp" style="left:856px;top:313px;width:139px;height:20px;background:#f0f0f0;border-color:#d5d5d5"></div>
<div class="a" style="left:860px;top:318px;font-size:10.7px;white-space:nowrap;">0x70</div>
<div class="grp" style="left:781px;top:353px;width:223px;height:159px;border-bottom:none"></div>
<div class="a" style="left:785px;top:345px;width:56px;height:14px;background:#f0f0f0"></div>
<div class="a" style="left:788px;top:347px;font-size:11px;white-space:nowrap;">Geometry</div>
<div class="a" style="left:676px;width:150px;text-align:right;top:373px;font-size:11px;white-space:nowrap;">Length:</div>
<div class="inp" style="left:833px;top:369px;width:162px;height:20px"></div>
<div class="a" style="left:837px;top:374px;font-size:10.7px;white-space:nowrap;">120</div>
<div class="a" style="left:676px;width:150px;text-align:right;top:397px;font-size:11px;white-space:nowrap;">Angle:</div>
<div class="inp" style="left:833px;top:393px;width:162px;height:20px"></div>
<div class="a" style="left:837px;top:398px;font-size:10.7px;white-space:nowrap;">0</div>
<div class="a" style="left:790px;top:417px;font-size:12px;white-space:nowrap;font-weight:bold">Start Point</div>
<div class="a" style="left:676px;width:150px;text-align:right;top:438px;font-size:11px;white-space:nowrap;">X:</div>
<div class="inp" style="left:833px;top:434px;width:162px;height:20px"></div>
<div class="a" style="left:837px;top:439px;font-size:10.7px;white-space:nowrap;">0</div>
<div class="a" style="left:676px;width:150px;text-align:right;top:462px;font-size:11px;white-space:nowrap;">Y:</div>
<div class="inp" style="left:833px;top:458px;width:162px;height:20px"></div>
<div class="a" style="left:837px;top:463px;font-size:10.7px;white-space:nowrap;">36.82</div>
<div class="a" style="left:790px;top:482px;font-size:12px;white-space:nowrap;font-weight:bold">End Point</div>
<div class="a" style="left:771px;top:499px;width:244px;height:14px;overflow:hidden">
<div class="a" style="left:0;top:3px;width:55px;text-align:right;font-size:11px">X:</div>
<div class="inp" style="left:62px;top:0px;width:162px;height:20px"></div>
<div class="a" style="left:66px;top:5px;font-size:10.7px">120</div>
</div>
<div class="dtitle" style="top:518px;height:19px"></div>
<div class="a" style="left:771px;top:522px;font-size:11px;white-space:nowrap;">Layer List</div>
<svg class="a" style="left:1002px;top:524px" width="30" height="11" viewBox="0 0 30 11"><rect x="3.5" y="0.5" width="6" height="5" fill="none" stroke="#000"/><rect x="3.5" y="0.5" width="6" height="1.5" fill="#000"/><rect x="1.5" y="3.5" width="6" height="6" fill="#fff" stroke="#000"/><rect x="1.5" y="3.5" width="6" height="1.5" fill="#000"/><path d="M17.5 1 L24.5 8 M24.5 1 L17.5 8" stroke="#000" stroke-width="1.6"/></svg>
<div class="lbtn" style="left:771px;width:50px"></div>
<div class="lbtn" style="left:823px;width:51px"></div>
<div class="lbtn" style="left:876px;width:50px"></div>
<div class="lbtn" style="left:928px;width:51px;border-color:#b8b8b8;background:linear-gradient(#f8f8f8,#efefef 50%,#e8e8e8)"></div>
<div class="lbtn" style="left:981px;width:50px"></div>
<svg class="a" style="left:787px;top:543px" width="18" height="13" viewBox="0 0 18 13"><path d="M0.5 6.5 Q2.5 0.3 9 0.3 Q15.5 0.3 17.5 6 Q15.5 12.3 9 12.5 Q2.5 12.5 0.5 6.5 Z" fill="#000"/><ellipse cx="9.5" cy="6.6" rx="4.6" ry="3.8" fill="#fff"/><circle cx="9" cy="6.6" r="2.3" fill="#000"/><circle cx="8.3" cy="5.7" r="0.8" fill="#fff"/></svg>
<svg class="a" style="left:839px;top:543px" width="18" height="13" viewBox="0 0 18 13"><path d="M0.5 6.5 Q2.5 0.3 9 0.3 Q15.5 0.3 17.5 6 Q15.5 12.3 9 12.5 Q2.5 12.5 0.5 6.5 Z" fill="#a8a8a8"/><ellipse cx="9.5" cy="6.6" rx="4.6" ry="3.8" fill="#fff"/><circle cx="9" cy="6.6" r="2.3" fill="#a8a8a8"/><circle cx="8.3" cy="5.7" r="0.8" fill="#fff"/></svg>
<svg class="a" style="left:893px;top:542px" width="16" height="16" viewBox="0 0 16 16"><path d="M8 1.5 V14.5 M1.5 8 H14.5" stroke="#d40000" stroke-width="2.6"/></svg>
<div class="a" style="left:946px;top:549px;width:14px;height:3px;background:#9a9a9a"></div>
<svg class="a" style="left:996px;top:540px" width="22" height="20" viewBox="0 0 22 20"><path d="M3 18 L5 13 L17 1.5 L20 4.5 L8 16 Z" fill="#f0b030" stroke="#a06a10" stroke-width=".8"/><path d="M17 1.5 L20 4.5 L21 3.5 L18 0.5 Z" fill="#e06060"/><path d="M3 18 L5 13 L8 16 Z" fill="#f0d8a8"/></svg>
<div class="a" style="left:770px;top:561px;width:262px;height:194px;border:1px solid #8a929e;background:#fff"></div>
<div class="a" style="left:772px;top:563px;width:258px;height:18px;border:1px solid #dadada;border-radius:2px;background:linear-gradient(#fafafa,#ebebeb)"></div>
<svg class="a" style="left:774px;top:566px" width="18" height="13" viewBox="0 0 18 13"><path d="M0.5 6.5 Q2.5 0.3 9 0.3 Q15.5 0.3 17.5 6 Q15.5 12.3 9 12.5 Q2.5 12.5 0.5 6.5 Z" fill="#1c3a5a"/><ellipse cx="9.5" cy="6.6" rx="4.6" ry="3.8" fill="#dfe8f0"/><circle cx="9" cy="6.6" r="2.3" fill="#1c3a5a"/><circle cx="8.3" cy="5.7" r="0.8" fill="#dfe8f0"/></svg>
<svg class="a" style="left:794px;top:564px" width="12" height="16" viewBox="0 0 12 16"><path d="M3.3 8 V5 Q3.3 2 6 2 Q8.7 2 8.7 5 V8" stroke="#86a6c8" stroke-width="1.5" fill="none"/><rect x="1.5" y="8" width="9" height="7.5" fill="#86a6c8"/></svg>
<div class="a" style="left:813px;top:566px;font-size:11.5px;white-space:nowrap;">0</div>
<svg class="a" style="left:774px;top:584px" width="18" height="13" viewBox="0 0 18 13"><path d="M0.5 6.5 Q2.5 0.3 9 0.3 Q15.5 0.3 17.5 6 Q15.5 12.3 9 12.5 Q2.5 12.5 0.5 6.5 Z" fill="#000"/><ellipse cx="9.5" cy="6.6" rx="4.6" ry="3.8" fill="#fff"/><circle cx="9" cy="6.6" r="2.3" fill="#000"/><circle cx="8.3" cy="5.7" r="0.8" fill="#fff"/></svg>
<svg class="a" style="left:794px;top:582px" width="12" height="16" viewBox="0 0 12 16"><path d="M3.3 8 V5 Q3.3 2 6 2 Q8.7 2 8.7 5 V8" stroke="#a8a8a8" stroke-width="1.5" fill="none"/><rect x="1.5" y="8" width="9" height="7.5" fill="#a8a8a8"/></svg>
<div class="a" style="left:813px;top:584px;font-size:11.5px;white-space:nowrap;">axes</div>
<svg class="a" style="left:774px;top:602px" width="18" height="13" viewBox="0 0 18 13"><path d="M0.5 6.5 Q2.5 0.3 9 0.3 Q15.5 0.3 17.5 6 Q15.5 12.3 9 12.5 Q2.5 12.5 0.5 6.5 Z" fill="#b0b0b0"/><ellipse cx="9.5" cy="6.6" rx="4.6" ry="3.8" fill="#fff"/><circle cx="9" cy="6.6" r="2.3" fill="#b0b0b0"/><circle cx="8.3" cy="5.7" r="0.8" fill="#fff"/></svg>
<svg class="a" style="left:794px;top:600px" width="12" height="16" viewBox="0 0 12 16"><path d="M3.3 8 V5 Q3.3 2 6 2 Q8.7 2 8.7 5 V8" stroke="#a8a8a8" stroke-width="1.5" fill="none"/><rect x="1.5" y="8" width="9" height="7.5" fill="#a8a8a8"/></svg>
<div class="a" style="left:813px;top:602px;font-size:11.5px;white-space:nowrap;">construction</div>
<svg class="a" style="left:774px;top:620px" width="18" height="13" viewBox="0 0 18 13"><path d="M0.5 6.5 Q2.5 0.3 9 0.3 Q15.5 0.3 17.5 6 Q15.5 12.3 9 12.5 Q2.5 12.5 0.5 6.5 Z" fill="#000"/><ellipse cx="9.5" cy="6.6" rx="4.6" ry="3.8" fill="#fff"/><circle cx="9" cy="6.6" r="2.3" fill="#000"/><circle cx="8.3" cy="5.7" r="0.8" fill="#fff"/></svg>
<svg class="a" style="left:794px;top:618px" width="12" height="16" viewBox="0 0 12 16"><path d="M3.3 8 V5 Q3.3 2 6 2 Q8.7 2 8.7 5 V8" stroke="#a8a8a8" stroke-width="1.5" fill="none"/><rect x="1.5" y="8" width="9" height="7.5" fill="#a8a8a8"/></svg>
<div class="a" style="left:813px;top:620px;font-size:11.5px;white-space:nowrap;">contour</div>
<svg class="a" style="left:774px;top:638px" width="18" height="13" viewBox="0 0 18 13"><path d="M0.5 6.5 Q2.5 0.3 9 0.3 Q15.5 0.3 17.5 6 Q15.5 12.3 9 12.5 Q2.5 12.5 0.5 6.5 Z" fill="#000"/><ellipse cx="9.5" cy="6.6" rx="4.6" ry="3.8" fill="#fff"/><circle cx="9" cy="6.6" r="2.3" fill="#000"/><circle cx="8.3" cy="5.7" r="0.8" fill="#fff"/></svg>
<svg class="a" style="left:794px;top:636px" width="12" height="16" viewBox="0 0 12 16"><path d="M3.3 8 V5 Q3.3 2 6 2 Q8.7 2 8.7 5 V8" stroke="#a8a8a8" stroke-width="1.5" fill="none"/><rect x="1.5" y="8" width="9" height="7.5" fill="#a8a8a8"/></svg>
<div class="a" style="left:813px;top:638px;font-size:11.5px;white-space:nowrap;">dim</div>
<svg class="a" style="left:774px;top:656px" width="18" height="13" viewBox="0 0 18 13"><path d="M0.5 6.5 Q2.5 0.3 9 0.3 Q15.5 0.3 17.5 6 Q15.5 12.3 9 12.5 Q2.5 12.5 0.5 6.5 Z" fill="#000"/><ellipse cx="9.5" cy="6.6" rx="4.6" ry="3.8" fill="#fff"/><circle cx="9" cy="6.6" r="2.3" fill="#000"/><circle cx="8.3" cy="5.7" r="0.8" fill="#fff"/></svg>
<svg class="a" style="left:794px;top:654px" width="12" height="16" viewBox="0 0 12 16"><path d="M3.3 8 V5 Q3.3 2 6 2 Q8.7 2 8.7 5 V8" stroke="#a8a8a8" stroke-width="1.5" fill="none"/><rect x="1.5" y="8" width="9" height="7.5" fill="#a8a8a8"/></svg>
<div class="a" style="left:813px;top:656px;font-size:11.5px;white-space:nowrap;">hatch</div>
<svg class="a" style="left:774px;top:674px" width="18" height="13" viewBox="0 0 18 13"><path d="M0.5 6.5 Q2.5 0.3 9 0.3 Q15.5 0.3 17.5 6 Q15.5 12.3 9 12.5 Q2.5 12.5 0.5 6.5 Z" fill="#000"/><ellipse cx="9.5" cy="6.6" rx="4.6" ry="3.8" fill="#fff"/><circle cx="9" cy="6.6" r="2.3" fill="#000"/><circle cx="8.3" cy="5.7" r="0.8" fill="#fff"/></svg>
<svg class="a" style="left:794px;top:672px" width="12" height="16" viewBox="0 0 12 16"><path d="M3.3 8 V5 Q3.3 2 6 2 Q8.7 2 8.7 5 V8" stroke="#a8a8a8" stroke-width="1.5" fill="none"/><rect x="1.5" y="8" width="9" height="7.5" fill="#a8a8a8"/></svg>
<div class="a" style="left:813px;top:674px;font-size:11.5px;white-space:nowrap;">hatch_border</div>
<div class="a" style="left:8px;top:757px;width:1024px;height:39px;background:#fff;overflow:hidden;border-left:1px solid #a0a0a0">
<div class="a" style="left:5px;top:-3.2px;font-size:10.4px;white-space:nowrap;color:#0000d8"><i>Command:</i> snapauto</div>
<div class="a" style="left:5px;top:9.5px;font-size:10.4px;white-space:nowrap;color:#0000d8"><i>Command:</i> snapauto</div>
<div class="a" style="left:5px;top:22.2px;font-size:10.4px;white-space:nowrap;color:#0000d8"><i>Command:</i> linemenu</div>
</div>
<div class="a" style="left:1015px;top:757px;width:16px;height:38px;background:linear-gradient(90deg,#e6e6e6,#f2f2f2 30%,#f2f2f2 70%,#e6e6e6)"></div>
<svg class="a" style="left:1015px;top:758px" width="16" height="36" viewBox="0 0 16 36"><path d="M4.5 11 L8 7 L11.5 11 Z M4.5 25 L8 29 L11.5 25 Z" fill="#333"/><path d="M2 18.5 H14" stroke="#d0d0d0"/></svg>
<div class="a" style="left:8px;top:795px;width:1024px;height:1px;background:#a0a0a0"></div>
<div class="a" style="left:8px;top:796px;width:1024px;height:23px;background:#fff;border-bottom:1px solid #8a929e;border-left:1px solid #a0a0a0;border-right:1px solid #8a929e"></div>
<div class="a" style="left:9px;top:803px;font-size:10.3px;white-space:nowrap;">Command:</div>
<div class="a" style="left:8px;top:820px;width:1024px;height:36px;background:#f0f0f0"></div>
<div class="a" style="left:161px;top:822px;width:1px;height:33px;background:#c8c8c8;box-shadow:1px 0 0 #fff"></div>
<div class="a" style="left:316px;top:822px;width:1px;height:33px;background:#c8c8c8;box-shadow:1px 0 0 #fff"></div>
<div class="a" style="left:577px;top:822px;width:1px;height:33px;background:#c8c8c8;box-shadow:1px 0 0 #fff"></div>
<div class="a" style="left:776px;top:822px;width:1px;height:33px;background:#c8c8c8;box-shadow:1px 0 0 #fff"></div>
<div class="a" style="left:909px;top:822px;width:1px;height:33px;background:#c8c8c8;box-shadow:1px 0 0 #fff"></div>
<div class="a" style="left:10px;top:824px;font-size:10.8px;white-space:nowrap;">55.6638,36.4368</div>
<div class="a" style="left:10px;top:841px;font-size:11px;white-space:nowrap;">-</div>
<div class="a" style="left:164px;top:824px;font-size:10.8px;white-space:nowrap;">66.529&lt;33.2083</div>
<div class="a" style="left:164px;top:841px;font-size:11px;white-space:nowrap;">-</div>
<div class="a" style="left:277px;top:827px;width:150px;text-align:right;font-size:8.8px;white-space:nowrap">Select entity or region</div>
<div class="a" style="left:277px;top:839px;width:150px;text-align:right;font-size:8.8px;white-space:nowrap">Move entity or reference</div>
<svg class="a" style="left:434px;top:822px" width="30" height="34" viewBox="0 0 30 34"><path d="M10 4 Q8 0 4 1" stroke="#666" stroke-width="1" fill="none"/><path d="M5 10 Q4 4 11 3 Q21 2 26 15 Q30 27 21 31 Q11 35 7 23 Z" fill="#fdfdfd" stroke="#8a8a8a"/><path d="M8 21 Q16 24 26 18" stroke="#d0d0d0" fill="none"/><path d="M7 9 Q14 7 20 6" stroke="#c8c8c8" fill="none"/><ellipse cx="14" cy="12" rx="2" ry="3.2" fill="#2a4ad0"/></svg>
<div class="a" style="left:583px;top:827px;font-size:8.8px;white-space:nowrap;">Selected entities:</div>
<div class="a" style="left:583px;top:839px;font-size:8.8px;white-space:nowrap;">1 Line on Layer "construction".</div>
<svg class="a" style="left:1007px;top:846px" width="30" height="14" viewBox="0 0 30 14"><g fill="none" stroke="#f07aa8" stroke-width="1"><rect x="1.5" y="1.5" width="5" height="11"/><rect x="8.5" y="1.5" width="5" height="11"/><rect x="15.5" y="1.5" width="5" height="11"/><rect x="22.5" y="1.5" width="5" height="11"/></g></svg>
</body></html>
